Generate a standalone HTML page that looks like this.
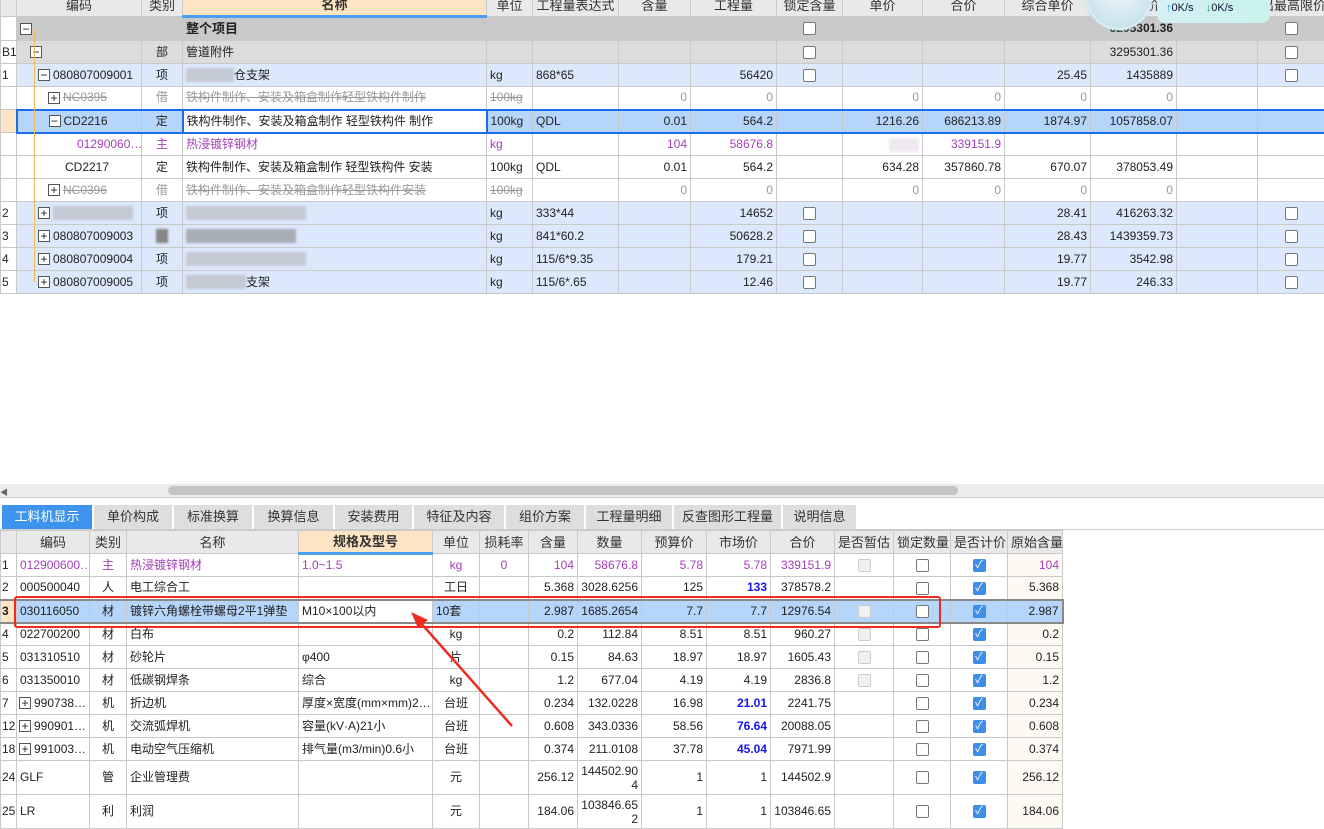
<!DOCTYPE html>
<html><head><meta charset="utf-8"><style>
*{box-sizing:border-box;margin:0;padding:0}
body{width:1324px;height:820px;overflow:hidden;background:#fff;font-family:"Liberation Sans","Noto Sans CJK SC",sans-serif;font-size:12px;color:#222;position:relative}
table{border-collapse:collapse;table-layout:fixed;position:absolute;left:0}
td,th{border:1px solid #c9c9c9;white-space:nowrap;overflow:hidden;padding:0 3px;font-weight:normal;height:23px;line-height:21px}
th{background:#e9e9e9;color:#333;font-size:13px}
th.hl{background:#fde4c3;border-bottom:3px solid #4a9ff0;font-weight:bold}
.r{text-align:right}.c{text-align:center}
.rn{padding:0 1px;text-align:left}
.cb{display:inline-block;width:13px;height:13px;border:1px solid #777;border-radius:2px;background:#fff;vertical-align:middle}
.cbd{border-color:#ccc;background:#f0f0f0}
.cbk{display:inline-block;width:13px;height:13px;border-radius:2px;background:#3c8ee8;color:#fff;font-size:11px;line-height:13px;text-align:center;vertical-align:middle}
.tb{display:inline-block;width:12px;height:12px;border:1px solid #555;background:#fff;font-size:12px;line-height:10px;text-align:center;vertical-align:middle;margin-right:3px;color:#222;text-decoration:none}
.g{color:#999;text-decoration:line-through}.g0{color:#999}
.p{color:#a23fb8}
.blue{color:#1515e6;font-weight:bold}
.ra{background:#c9c9c9}.rb{background:#dcdcdc}.rx{background:#dce8fb}
.sel td{background:#b5d5fb;border-top:2px solid #1a6fe8;border-bottom:2px solid #1a6fe8}
.blur{display:inline-block;height:14px;background:#c4cad4;vertical-align:middle;filter:blur(1px)}
.cream{background:#fdfaf3}
.sel2 td{background:#b5d5fb;border-top:2px solid #888;border-bottom:2px solid #888}
</style></head><body>

<table style="top:-7px;width:1324px">
<colgroup><col style="width:16px"><col style="width:125px"><col style="width:41px"><col style="width:304px"><col style="width:46px"><col style="width:86px"><col style="width:72px"><col style="width:86px"><col style="width:66px"><col style="width:80px"><col style="width:82px"><col style="width:86px"><col style="width:86px"><col style="width:81px"><col style="width:67px"></colgroup>
<tr><th></th><th>编码</th><th>类别</th><th class="hl">名称</th><th>单位</th><th>工程量表达式</th><th>含量</th><th>工程量</th><th>锁定含量</th><th>单价</th><th>合价</th><th>综合单价</th><th>综合合价</th><th></th><th>出最高限价</th></tr>
<tr class="ra"><td style="background:#fff"></td><td style="padding-left:3px"><span class="tb">−</span></td><td></td><td><b style="font-size:13px">整个项目</b></td><td></td><td></td><td></td><td></td><td class="c"><span class="cb"></span></td><td></td><td></td><td></td><td class="r"><b>3295301.36</b></td><td></td><td class="c"><span class="cb"></span></td></tr>
<tr class="rb"><td class="rn" style="background:#fff">B1</td><td style="padding-left:13px"><span class="tb">−</span></td><td class="c">部</td><td>管道附件</td><td></td><td></td><td></td><td></td><td class="c"><span class="cb"></span></td><td></td><td></td><td></td><td class="r">3295301.36</td><td></td><td class="c"><span class="cb"></span></td></tr>
<tr class="rx"><td class="rn" style="background:#fff">1</td><td style="padding-left:21px"><span class="tb">−</span>080807009001</td><td class="c">项</td><td><span class="blur" style="width:48px"></span>仓支架</td><td>kg</td><td>868*65</td><td></td><td class="r">56420</td><td class="c"><span class="cb"></span></td><td></td><td></td><td class="r">25.45</td><td class="r">1435889</td><td></td><td class="c"><span class="cb"></span></td></tr>
<tr><td></td><td style="padding-left:31px"><span class="tb">+</span><span class="g">NC0395</span></td><td class="c g0">借</td><td class="g">铁构件制作、安装及箱盒制作轻型铁构件制作</td><td class="g">100kg</td><td></td><td class="r g0">0</td><td class="r g0">0</td><td></td><td class="r g0">0</td><td class="r g0">0</td><td class="r g0">0</td><td class="r g0">0</td><td></td><td></td></tr>
<tr class="sel"><td style="background:#fde4c3;border-top:1px solid #c9c9c9;border-bottom:1px solid #c9c9c9"></td><td style="padding-left:31px;border-left:2px solid #1a6fe8"><span class="tb">−</span>CD2216</td><td class="c">定</td><td style="background:#fff;border:2px solid #1a6fe8">铁构件制作、安装及箱盒制作 轻型铁构件 制作</td><td>100kg</td><td>QDL</td><td class="r">0.01</td><td class="r">564.2</td><td></td><td class="r">1216.26</td><td class="r">686213.89</td><td class="r">1874.97</td><td class="r">1057858.07</td><td></td><td></td></tr>
<tr><td></td><td style="padding-left:60px" class="p">01290060…</td><td class="c p">主</td><td class="p">热浸镀锌钢材</td><td class="p">kg</td><td></td><td class="r p">104</td><td class="r p">58676.8</td><td></td><td class="r"><span class="blur" style="width:30px;background:#f0e8f0"></span></td><td class="r p">339151.9</td><td></td><td></td><td></td><td></td></tr>
<tr><td></td><td style="padding-left:48px">CD2217</td><td class="c">定</td><td>铁构件制作、安装及箱盒制作 轻型铁构件 安装</td><td>100kg</td><td>QDL</td><td class="r">0.01</td><td class="r">564.2</td><td></td><td class="r">634.28</td><td class="r">357860.78</td><td class="r">670.07</td><td class="r">378053.49</td><td></td><td></td></tr>
<tr><td></td><td style="padding-left:31px"><span class="tb">+</span><span class="g">NC0396</span></td><td class="c g0">借</td><td class="g">铁构件制作、安装及箱盒制作轻型铁构件安装</td><td class="g">100kg</td><td></td><td class="r g0">0</td><td class="r g0">0</td><td></td><td class="r g0">0</td><td class="r g0">0</td><td class="r g0">0</td><td class="r g0">0</td><td></td><td></td></tr>
<tr class="rx"><td class="rn" style="background:#fff">2</td><td style="padding-left:21px"><span class="tb">+</span><span class="blur" style="width:80px"></span></td><td class="c">项</td><td><span class="blur" style="width:120px"></span></td><td>kg</td><td>333*44</td><td></td><td class="r">14652</td><td class="c"><span class="cb"></span></td><td></td><td></td><td class="r">28.41</td><td class="r">416263.32</td><td></td><td class="c"><span class="cb"></span></td></tr>
<tr class="rx"><td class="rn" style="background:#fff">3</td><td style="padding-left:21px"><span class="tb">+</span>080807009003</td><td class="c"><span class="blur" style="width:12px;background:#888"></span></td><td><span class="blur" style="width:110px;background:#a8aeb8"></span></td><td>kg</td><td>841*60.2</td><td></td><td class="r">50628.2</td><td class="c"><span class="cb"></span></td><td></td><td></td><td class="r">28.43</td><td class="r">1439359.73</td><td></td><td class="c"><span class="cb"></span></td></tr>
<tr class="rx"><td class="rn" style="background:#fff">4</td><td style="padding-left:21px"><span class="tb">+</span>080807009004</td><td class="c">项</td><td><span class="blur" style="width:120px"></span></td><td>kg</td><td>115/6*9.35</td><td></td><td class="r">179.21</td><td class="c"><span class="cb"></span></td><td></td><td></td><td class="r">19.77</td><td class="r">3542.98</td><td></td><td class="c"><span class="cb"></span></td></tr>
<tr class="rx"><td class="rn" style="background:#fff">5</td><td style="padding-left:21px"><span class="tb">+</span>080807009005</td><td class="c">项</td><td><span class="blur" style="width:60px"></span>支架</td><td>kg</td><td>115/6*.65</td><td></td><td class="r">12.46</td><td class="c"><span class="cb"></span></td><td></td><td></td><td class="r">19.77</td><td class="r">246.33</td><td></td><td class="c"><span class="cb"></span></td></tr>
</table>
<div style="position:absolute;left:34px;top:30px;width:1px;height:252px;background:#f3b45a"></div>

<!-- bubble -->
<div style="position:absolute;left:1086px;top:-36px;width:66px;height:66px;border-radius:50%;background:radial-gradient(circle at 50% 40%,#eef6fb,#bfdde8);border:2px solid #d8eef4;box-shadow:0 0 4px #bde"></div>
<div style="position:absolute;left:1157px;top:-6px;width:113px;height:29px;border-radius:8px;background:linear-gradient(90deg,#d4f0f4,#c8f3ec);font-size:11px;line-height:29px;padding-left:9px;color:#113"><span style="color:#2a8de0">↑</span>0K/s &nbsp; &nbsp;<span style="color:#1ba34a">↓</span>0K/s</div>

<!-- scrollbar -->
<div style="position:absolute;left:0;top:484px;width:1324px;height:14px;background:#ececec;border-bottom:1px solid #ccc"></div>
<div style="position:absolute;left:168px;top:486px;width:790px;height:9px;border-radius:5px;background:#c4c4c4"></div>
<div style="position:absolute;left:0;top:487px;font-size:8px;color:#666">◀</div>

<!-- tabs -->
<div style="position:absolute;left:0;top:529px;width:1324px;height:1px;background:#ccc"></div>
<div style="position:absolute;top:505px;left:0;font-size:13px">
<div style="position:absolute;left:2px;width:90px;height:24px;background:#3e94ec;color:#fff;text-align:center;line-height:24px">工料机显示</div>
<div style="position:absolute;left:94px;width:78px;height:24px;background:#dedede;color:#333;text-align:center;line-height:24px">单价构成</div>
<div style="position:absolute;left:174px;width:78px;height:24px;background:#dedede;color:#333;text-align:center;line-height:24px">标准换算</div>
<div style="position:absolute;left:254px;width:79px;height:24px;background:#dedede;color:#333;text-align:center;line-height:24px">换算信息</div>
<div style="position:absolute;left:335px;width:77px;height:24px;background:#dedede;color:#333;text-align:center;line-height:24px">安装费用</div>
<div style="position:absolute;left:414px;width:90px;height:24px;background:#dedede;color:#333;text-align:center;line-height:24px">特征及内容</div>
<div style="position:absolute;left:506px;width:78px;height:24px;background:#dedede;color:#333;text-align:center;line-height:24px">组价方案</div>
<div style="position:absolute;left:586px;width:86px;height:24px;background:#dedede;color:#333;text-align:center;line-height:24px">工程量明细</div>
<div style="position:absolute;left:674px;width:107px;height:24px;background:#dedede;color:#333;text-align:center;line-height:24px">反查图形工程量</div>
<div style="position:absolute;left:783px;width:73px;height:24px;background:#dedede;color:#333;text-align:center;line-height:24px">说明信息</div>
</div>

<table style="top:530px;width:1062px">
<colgroup><col style="width:16px"><col style="width:73px"><col style="width:37px"><col style="width:172px"><col style="width:134px"><col style="width:47px"><col style="width:49px"><col style="width:49px"><col style="width:64px"><col style="width:65px"><col style="width:64px"><col style="width:64px"><col style="width:59px"><col style="width:57px"><col style="width:57px"><col style="width:55px"></colgroup>
<tr><th></th><th>编码</th><th>类别</th><th>名称</th><th class="hl">规格及型号</th><th>单位</th><th>损耗率</th><th>含量</th><th>数量</th><th>预算价</th><th>市场价</th><th>合价</th><th>是否暂估</th><th>锁定数量</th><th>是否计价</th><th>原始含量</th></tr>
<tr class="p"><td class="rn" style="color:#222">1</td><td>012900600…</td><td class="c">主</td><td>热浸镀锌钢材</td><td>1.0~1.5</td><td class="c">kg</td><td class="c">0</td><td class="r">104</td><td class="r">58676.8</td><td class="r">5.78</td><td class="r">5.78</td><td class="r">339151.9</td><td class="c"><span class="cb cbd"></span></td><td class="c"><span class="cb"></span></td><td class="c"><span class="cbk">✓</span></td><td class="r cream">104</td></tr>
<tr><td class="rn">2</td><td>000500040</td><td class="c">人</td><td>电工综合工</td><td></td><td class="c">工日</td><td></td><td class="r">5.368</td><td class="r">3028.6256</td><td class="r">125</td><td class="r blue">133</td><td class="r">378578.2</td><td></td><td class="c"><span class="cb"></span></td><td class="c"><span class="cbk">✓</span></td><td class="r cream">5.368</td></tr>
<tr class="sel2"><td class="rn" style="background:#fde4c3;font-weight:bold">3</td><td>030116050</td><td class="c">材</td><td>镀锌六角螺栓带螺母2平1弹垫</td><td style="background:#fff">M10×100以内</td><td>10套</td><td></td><td class="r">2.987</td><td class="r">1685.2654</td><td class="r">7.7</td><td class="r">7.7</td><td class="r">12976.54</td><td class="c"><span class="cb cbd"></span></td><td class="c"><span class="cb"></span></td><td class="c"><span class="cbk">✓</span></td><td class="r" style="border-right:2px solid #888">2.987</td></tr>
<tr><td class="rn">4</td><td>022700200</td><td class="c">材</td><td>白布</td><td></td><td class="c">kg</td><td></td><td class="r">0.2</td><td class="r">112.84</td><td class="r">8.51</td><td class="r">8.51</td><td class="r">960.27</td><td class="c"><span class="cb cbd"></span></td><td class="c"><span class="cb"></span></td><td class="c"><span class="cbk">✓</span></td><td class="r cream">0.2</td></tr>
<tr><td class="rn">5</td><td>031310510</td><td class="c">材</td><td>砂轮片</td><td>φ400</td><td class="c">片</td><td></td><td class="r">0.15</td><td class="r">84.63</td><td class="r">18.97</td><td class="r">18.97</td><td class="r">1605.43</td><td class="c"><span class="cb cbd"></span></td><td class="c"><span class="cb"></span></td><td class="c"><span class="cbk">✓</span></td><td class="r cream">0.15</td></tr>
<tr><td class="rn">6</td><td>031350010</td><td class="c">材</td><td>低碳钢焊条</td><td>综合</td><td class="c">kg</td><td></td><td class="r">1.2</td><td class="r">677.04</td><td class="r">4.19</td><td class="r">4.19</td><td class="r">2836.8</td><td class="c"><span class="cb cbd"></span></td><td class="c"><span class="cb"></span></td><td class="c"><span class="cbk">✓</span></td><td class="r cream">1.2</td></tr>
<tr><td class="rn">7</td><td style="padding-left:2px"><span class="tb">+</span>990738…</td><td class="c">机</td><td>折边机</td><td>厚度×宽度(mm×mm)2…</td><td class="c">台班</td><td></td><td class="r">0.234</td><td class="r">132.0228</td><td class="r">16.98</td><td class="r blue">21.01</td><td class="r">2241.75</td><td></td><td class="c"><span class="cb"></span></td><td class="c"><span class="cbk">✓</span></td><td class="r cream">0.234</td></tr>
<tr><td class="rn">12</td><td style="padding-left:2px"><span class="tb">+</span>990901…</td><td class="c">机</td><td>交流弧焊机</td><td>容量(kV·A)21小</td><td class="c">台班</td><td></td><td class="r">0.608</td><td class="r">343.0336</td><td class="r">58.56</td><td class="r blue">76.64</td><td class="r">20088.05</td><td></td><td class="c"><span class="cb"></span></td><td class="c"><span class="cbk">✓</span></td><td class="r cream">0.608</td></tr>
<tr><td class="rn">18</td><td style="padding-left:2px"><span class="tb">+</span>991003…</td><td class="c">机</td><td>电动空气压缩机</td><td>排气量(m3/min)0.6小</td><td class="c">台班</td><td></td><td class="r">0.374</td><td class="r">211.0108</td><td class="r">37.78</td><td class="r blue">45.04</td><td class="r">7971.99</td><td></td><td class="c"><span class="cb"></span></td><td class="c"><span class="cbk">✓</span></td><td class="r cream">0.374</td></tr>
<tr style="height:34px"><td class="rn" style="height:34px">24</td><td>GLF</td><td class="c">管</td><td>企业管理费</td><td></td><td class="c">元</td><td></td><td class="r">256.12</td><td class="r" style="line-height:14px;white-space:normal;word-break:break-all">144502.904</td><td class="r">1</td><td class="r">1</td><td class="r">144502.9</td><td></td><td class="c"><span class="cb"></span></td><td class="c"><span class="cbk">✓</span></td><td class="r cream">256.12</td></tr>
<tr style="height:34px"><td class="rn" style="height:34px">25</td><td>LR</td><td class="c">利</td><td>利润</td><td></td><td class="c">元</td><td></td><td class="r">184.06</td><td class="r" style="line-height:14px;white-space:normal;word-break:break-all">103846.652</td><td class="r">1</td><td class="r">1</td><td class="r">103846.65</td><td></td><td class="c"><span class="cb"></span></td><td class="c"><span class="cbk">✓</span></td><td class="r cream">184.06</td></tr>
</table>

<div style="position:absolute;left:14px;top:596px;width:927px;height:32px;border:2px solid #f02a1e;border-radius:3px"></div>
<svg style="position:absolute;left:0;top:0" width="1324" height="820"><path d="M512 726 L420 622" stroke="#f02a1e" stroke-width="2.5" fill="none"/><path d="M411 612 L428 620 L418 628 Z" fill="#f02a1e"/></svg>
</body></html>
